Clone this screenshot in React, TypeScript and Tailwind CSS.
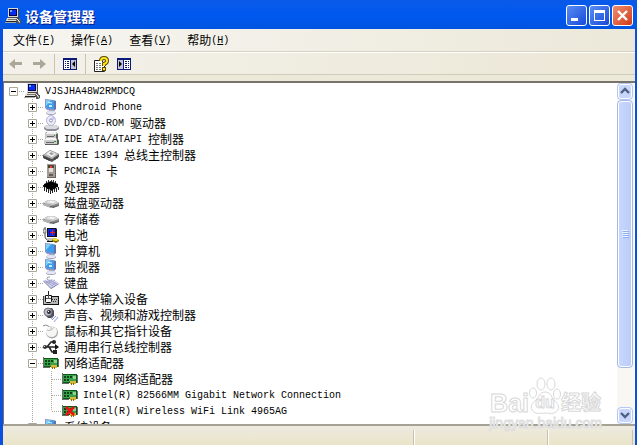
import React from "react";

type IconName =
  | "computer"
  | "phone"
  | "disc"
  | "ide"
  | "firewire"
  | "pcmcia"
  | "cpu"
  | "drive"
  | "battery"
  | "pc"
  | "monitor"
  | "keyboard"
  | "hid"
  | "sound"
  | "mouse"
  | "usb"
  | "network"
  | "networkOff";

type Device = { label: string; icon: IconName; open?: boolean; children?: Device[] };

const categories: Device[] = [
  { label: "Android Phone", icon: "phone" },
  { label: "DVD/CD-ROM 驱动器", icon: "disc" },
  { label: "IDE ATA/ATAPI 控制器", icon: "ide" },
  { label: "IEEE 1394 总线主控制器", icon: "firewire" },
  { label: "PCMCIA 卡", icon: "pcmcia" },
  { label: "处理器", icon: "cpu" },
  { label: "磁盘驱动器", icon: "drive" },
  { label: "存储卷", icon: "drive" },
  { label: "电池", icon: "battery" },
  { label: "计算机", icon: "pc" },
  { label: "监视器", icon: "monitor" },
  { label: "键盘", icon: "keyboard" },
  { label: "人体学输入设备", icon: "hid" },
  { label: "声音、视频和游戏控制器", icon: "sound" },
  { label: "鼠标和其它指针设备", icon: "mouse" },
  { label: "通用串行总线控制器", icon: "usb" },
  {
    label: "网络适配器",
    icon: "network",
    open: true,
    children: [
      { label: "1394 网络适配器", icon: "network" },
      { label: "Intel(R) 82566MM Gigabit Network Connection", icon: "network" },
      { label: "Intel(R) Wireless WiFi Link 4965AG", icon: "networkOff" },
    ],
  },
  { label: "系统设备", icon: "monitor" },
];

const menus = [
  { label: "文件", accessKey: "F" },
  { label: "操作", accessKey: "A" },
  { label: "查看", accessKey: "V" },
  { label: "帮助", accessKey: "H" },
];

const Screen = ({ glint }: { glint?: boolean }) => (
  <>
    <path d="M2 0l9 1 2 1v8l-2 2-7-1-2-2z" fill="#8c96c4" />
    <path d="M3 1l8 1v8l-7-1-1-1z" fill="#3c9cec" />
    <path d="M3 1l5 .6L3 7z" fill="#7cd0fc" />
    <path d="M11 2h2v8l-2 1z" fill="#6470ac" />
    {glint && (
      <>
        <path d="M5 3l4 .5v1L5 4z" fill="#e4f6ff" />
        <path d="M6 6h3v2H6z" fill="#c4ecff" />
      </>
    )}
    <path d="M6 11h4v2H6z" fill="#a7acc8" />
    <ellipse cx="8" cy="14" rx="5" ry="2" fill="#a6a9c2" />
    <ellipse cx="8" cy="13.500" rx="4.500" ry="1.500" fill="#e6e7f3" />
  </>
);

const Card = () => (
  <>
    <path d="M0 3h15v9H0z" fill="#0b5a1c" />
    <path d="M1 4h13v7H1z" fill="#3aa04a" />
    <path d="M2 5h2v2H2zM5 5h2v2H5zM8 5h2v2H8zM2 8h2v2H2zM5 8h2v2H5z" fill="#0b4414" />
    <path d="M11 5h3v3h-3z" fill="#8fd08f" />
    <path d="M15 4h1v8h-1zM1 12h6v1H1zM0 2h1v11H0z" fill="#6a6a6a" />
    <path d="M8 10h6v3H8z" fill="#d8b838" />
    <path d="M9 12h1v2H9zM11 12h1v2h-1z" fill="#8a6d10" />
  </>
);

const drawings: Record<IconName, React.ReactNode> = {
  computer: (
    <>
      <path d="M3 0h10l1 1v9H4L3 9z" fill="#4a4a48" />
      <path d="M3 0h10v9H3z" fill="#dcdcd4" />
      <path d="M4 1h8v7H4z" fill="#000050" />
      <path d="M5 2h6v5H5z" fill="#0a2cf0" />
      <path d="M5 2h2v2H5z" fill="#60b8ff" />
      <path d="M2 10h12l1 3H1z" fill="#e2e0d8" />
      <path d="M1 13h13v1H1z" fill="#222" />
      <path d="M3 11h9v1H3z" fill="#77756c" />
      <path d="M0 14h11v1H0z" fill="#a9a9a1" />
      <path d="M12 10h2l1 2h1v3l-2 1h-2v-2l-1-1z" fill="#55554f" />
      <path d="M12 11l2 2v1h1" fill="none" stroke="#eee" />
    </>
  ),
  phone: <Screen glint />,
  monitor: <Screen glint />,
  pc: <Screen />,
  disc: (
    <>
      <path d="M1 12l3-2h9l3 2v2l-3 2H4l-3-2z" fill="#8e8e98" />
      <path d="M1 12l3-2h9l3 2-3 2H4z" fill="#dadae0" />
      <ellipse cx="8" cy="5.500" rx="4.500" ry="5" fill="#ececf8" stroke="#b4b4d0" />
      <path d="M8 5l2-4 2 3z" fill="#bcc4ff" />
      <circle cx="8" cy="5.500" r="1.500" fill="#fff" stroke="#9494b8" />
    </>
  ),
  ide: (
    <>
      <path d="M3 1h10l2 2v6H2V3z" fill="#5d5d5d" />
      <path d="M4 1h9l1 2H2z" fill="#f2f2f2" />
      <path d="M2 3h11v4H2z" fill="#c8c8c8" />
      <path d="M4 7h9l3 2v4l-1 1H2V9z" fill="#5d5d5d" />
      <path d="M3 7h10l1 2H1z" fill="#f6f6f6" />
      <path d="M1 9h13v4H1z" fill="#cdcdcd" />
      <path d="M3 11h8v1H3zM4 5h7v1H4z" fill="#666" />
      <path d="M11 10h2v1h-2zM11 4h1v1h-1z" fill="#22a022" />
    </>
  ),
  firewire: (
    <>
      <path d="M0 8l7-5 9 4v3l-7 5-9-4z" fill="#555" />
      <path d="M0 8l7-5 9 4-7 5z" fill="#b9b9b9" />
      <path d="M3 7l4-3 6 3-4 3z" fill="#f2f2f2" />
      <path d="M6 7l2-2 3 2-2 1z" fill="#999" />
      <path d="M2 10v2M4 11v2M6 12v2M12 11v2M14 10v2" stroke="#333" />
    </>
  ),
  pcmcia: (
    <>
      <path d="M4 1h8l1 1v13H4z" fill="#6c6460" />
      <path d="M4 1h8v13H4z" fill="#a39a94" />
      <path d="M5 2h6v3H5z" fill="#4d4541" />
      <path d="M6 5h4v4H6z" fill="#e2ddd8" />
      <path d="M7 3h2v2H7z" fill="#f04020" />
      <path d="M6 11h4v2H6z" fill="#635a56" />
    </>
  ),
  cpu: (
    <>
      <path d="M1 5l7-3 7 3v3l-7 4-7-4z" fill="#000" />
      <path d="M1.500 8v4M3.500 9v4M5.500 10v4M7.500 12v3M9.500 11v3M11.500 10v3M13.500 9v4M15.500 8v3" stroke="#222" />
      <path d="M3.500 2v2M5.500 1v2M8.500 1v2M10.500 1v2M12.500 2v2M.5 6v2" stroke="#333" />
      <path d="M2 8h1v1H2zM6 10h1v1H6zM10 10h1v1h-1zM13 8h1v1h-1z" fill="#aaa" />
    </>
  ),
  drive: (
    <>
      <path d="M0 8l5-3h6l5 3v2l-6 3h-2L0 10z" fill="#8a8a8a" />
      <path d="M0 8l5-3h6l5 3-6 2z" fill="#d2d2d2" />
      <path d="M4 7l3-1h4l2 1-4 1z" fill="#f6f6f6" />
      <path d="M0 8l9 2v3L0 10z" fill="#b2b2b2" />
      <path d="M9 12l7-2v1l-6 2z" fill="#5f5f5f" />
      <path d="M7 11h2v1H7z" fill="#4c6a4c" />
    </>
  ),
  battery: (
    <>
      <path d="M4 1h9l1 1v8H4z" fill="#111" />
      <path d="M5 2h7v7H5z" fill="#1028e8" />
      <path d="M6 3h1v5H6z" fill="#101080" />
      <path d="M9 3h1v2h2v1h-2v2H9V6H7V5h2z" fill="#f02020" />
      <path d="M2 0v9q0 4 5 5" fill="none" stroke="#444" />
      <path d="M0 2h3v4H0z" fill="#ccc" stroke="#333" strokeWidth=".5" />
      <path d="M4 11h8v3H6z" fill="#c3c3bb" />
      <path d="M4 14h6v1H4z" fill="#111" />
      <path d="M9 13l3-2 4 2v1l-3 2-4-2z" fill="#776a08" />
      <path d="M9 13l3-2 4 2-3 1z" fill="#f5e628" />
    </>
  ),
  keyboard: (
    <>
      <path d="M0 6l9-1 7 4-8 5z" fill="#7678a8" />
      <path d="M0 5l9-1 7 4-8 5z" fill="#dadbf2" />
      <path d="M2 6l10 3M5 5l8 3M3 7l7 4M5 9l7-4M3 8l6-3M8 11l6-3" stroke="#a2a4d0" />
      <path d="M5 5q-3-3 2-3" fill="none" stroke="#9c9cae" />
    </>
  ),
  hid: (
    <>
      <path d="M1 5h14v9H1z" fill="#b7b7b7" />
      <path d="M8 5h7v1H8zM15 5h1v9h-1zM0 13h16v1H0z" fill="#111" />
      <path d="M0 5h1v9H0z" fill="#444" />
      <path d="M9 8h1v1H9zM11 8h1v1h-1zM13 8h1v1h-1zM10 10h1v1h-1zM12 10h1v1h-1z" fill="#333" />
      <path d="M5.500 0v4" stroke="#222" />
      <path d="M2.500 4.500h6v6l-1 1h-4l-1-1z" fill="#f8f8f8" stroke="#111" />
      <path d="M5.500 4v3M3 7.500h5" stroke="#555" />
    </>
  ),
  sound: (
    <>
      <path d="M4 1h5l2 3v5l-3 2H5L2 8V3z" fill="#4f4f57" />
      <circle cx="5" cy="5" r="4" fill="#b9b9c4" stroke="#74747c" />
      <circle cx="6" cy="5" r="2" fill="#303038" />
      <path d="M5 4h1v1H5z" fill="#fff" />
      <path d="M9 13l4-4M11 15l4-5M8 12l2-2" stroke="#8f9ae0" />
    </>
  ),
  mouse: (
    <>
      <path d="M0 3q3-2 5 0l2 1" fill="none" stroke="#8c8c8c" />
      <ellipse cx="9" cy="9.500" rx="6" ry="6" fill="#a9a9a9" />
      <ellipse cx="8.500" cy="8.500" rx="5.500" ry="5.500" fill="#f6f6f4" />
      <path d="M4 7q4 2 7-3M8 3v4" fill="none" stroke="#bcbcbc" />
    </>
  ),
  usb: (
    <>
      <path d="M1 8h13M4 8l4-5h3M6 8l3 5h2" fill="none" stroke="#222" strokeWidth="1.500" />
      <circle cx="2" cy="8" r="2" fill="#333" />
      <path d="M1 7h1v1H1z" fill="#ccc" />
      <path d="M12 5l4 3-4 3z" fill="#111" />
      <circle cx="11" cy="3" r="2" fill="#222" />
      <path d="M10 11h4v4h-4z" fill="#222" />
    </>
  ),
  network: <Card />,
  networkOff: (
    <>
      <Card />
      <path d="M4 4l8 8M12 4l-8 8" stroke="#f01010" strokeWidth="2.500" />
    </>
  ),
};

const Icon = ({ name }: { name: IconName }) => (
  <svg viewBox="0 0 16 16" className="size-4 shrink-0" aria-hidden="true">
    {drawings[name]}
  </svg>
);

// Latin runs use a half-width face so that two letters take one ideograph
const Label = ({ text }: { text: string }) => (
  <span className="flex items-center whitespace-pre pl-[5px] text-xs leading-4">
    {text.split(/([\x20-\x7e]+)/).filter(Boolean).map((run, i) =>
      /^[\x20-\x7e]/.test(run) ? (
        <span key={i} className="pt-px font-['Liberation_Mono',monospace] text-[10px] leading-4">
          {run}
        </span>
      ) : (
        <span key={i}>{run}</span>
      )
    )}
  </span>
);

const Guide = ({ line, branch }: { line?: "full" | "half"; branch?: boolean }) => (
  <svg viewBox="0 0 19 16" className="h-4 w-[19px] shrink-0" aria-hidden="true">
    {line && (
      <path d={line === "full" ? "M8.5 0v16" : "M8.5 0v8"} stroke="#aca899" strokeDasharray="1 1" />
    )}
    {branch && <path d="M9 8.5h10" stroke="#aca899" strokeDasharray="1 1" />}
  </svg>
);

const Expander = ({ open, root, label }: { open?: boolean; root?: boolean; label: string }) => (
  <button aria-label={label} aria-expanded={!!open} className="h-4 w-[19px] shrink-0">
    <svg viewBox="0 0 19 16" className="h-4 w-[19px]">
      {!root && <path d="M8.5 0v16" stroke="#aca899" strokeDasharray="1 1" />}
      <path d="M14 8.5h5" stroke="#aca899" strokeDasharray="1 1" />
      <path d="M4.5 4.5h8v8h-8z" fill="#fff" stroke="#aca899" />
      <path d={open ? "M6 8.5h5" : "M6 8.5h5M8.5 6v5"} stroke="#000" />
    </svg>
  </button>
);

const Category = ({ device }: { device: Device }) => (
  <li>
    <div className="flex h-4 items-center">
      <Guide />
      <Expander open={device.open} label={device.label} />
      <Icon name={device.icon} />
      <Label text={device.label} />
    </div>
    {device.children && (
      <ul>
        {device.children.map((child, i) => (
          <li key={child.label} className="flex h-4 items-center">
            <Guide />
            <Guide line="full" />
            <Guide line={i === device.children!.length - 1 ? "half" : "full"} branch />
            <Icon name={child.icon} />
            <Label text={child.label} />
          </li>
        ))}
      </ul>
    )}
  </li>
);

const TitleBar = () => (
  <header className="flex h-[29px] shrink-0 items-center bg-linear-to-b from-[#0a5ae8] via-[#0058f0] to-[#0054e0] pl-[5px] pr-1 pt-0.5">
    <Icon name="computer" />
    <h1 className="flex-1 pl-1 text-sm font-bold leading-5 text-white [text-shadow:1px_1px_#0a1883]">
      设备管理器
    </h1>
    <div className="flex gap-0.5">
      <button aria-label="最小化" className="size-[21px] rounded-[3px] border border-white bg-linear-to-br from-[#5a8cf4] to-[#1a48d8]">
        <svg viewBox="0 0 19 19">
          <path d="M4 12h7v3H4z" fill="#fff" />
        </svg>
      </button>
      <button aria-label="最大化" className="size-[21px] rounded-[3px] border border-white bg-linear-to-br from-[#5a8cf4] to-[#1a48d8]">
        <svg viewBox="0 0 19 19">
          <path d="M4 4h11v11H4zM5 7v7h9V7z" fill="#fff" fillRule="evenodd" />
        </svg>
      </button>
      <button aria-label="关闭" className="size-[21px] rounded-[3px] border border-white bg-linear-to-br from-[#f08c6c] to-[#d03810]">
        <svg viewBox="0 0 19 19">
          <path d="M5 5l9 9M14 5l-9 9" stroke="#fff" strokeWidth="2.400" />
        </svg>
      </button>
    </div>
  </header>
);

const MenuBar = () => (
  <nav className="flex h-[23px] shrink-0 items-center border-b border-[#d6d2c2] bg-linear-to-r from-[#f6f5f1] to-[#ece8d9] pl-[2px]">
    {menus.map((menu) => (
      <button key={menu.accessKey} className="flex items-center px-2 text-xs leading-4">
        {menu.label}
        <span className="pt-px font-['Liberation_Mono',monospace] text-[10px]">
          (<u>{menu.accessKey}</u>)
        </span>
      </button>
    ))}
  </nav>
);

const Toolbar = () => (
  <div className="flex h-[23px] shrink-0 items-center border-b border-t border-b-[#d0ccbb] border-t-white bg-linear-to-r from-[#f3f1ea] to-[#ece7d6] pl-[5px]">
    <button aria-label="后退" disabled className="mr-[7px]">
      <svg viewBox="0 0 16 16" className="size-4">
        <path d="M1 8l6-5v3h7v3H7v4z" fill="#aca899" />
      </svg>
    </button>
    <button aria-label="前进" disabled>
      <svg viewBox="0 0 16 16" className="size-4">
        <path d="M15 8L9 3v3H2v3h7v4z" fill="#aca899" />
      </svg>
    </button>
    <span className="mx-[7px] h-5 w-px bg-[#c9c4b2]" />
    <button aria-label="显示/隐藏控制台树">
      <svg viewBox="0 0 16 16" className="size-4">
        <path d="M1 2h14v12H1z" fill="#0a1a78" />
        <path d="M2 4h6v9H2z" fill="#fff" />
        <path d="M8 4h6v9H8z" fill="#c4c4d4" />
        <path d="M3 5h1v1H3zM5 5h2v1H5zM3 7h1v1H3zM5 7h2v1H5zM3 9h1v1H3zM5 9h2v1H5zM3 11h1v1H3zM5 11h2v1H5zM8 4h1v9H8z" fill="#0a1a78" />
        <path d="M13 5v6l-3-3z" fill="#000" />
      </svg>
    </button>
    <span className="mx-[7px] h-5 w-px bg-[#c9c4b2]" />
    <button aria-label="帮助" className="mr-[7px]">
      <svg viewBox="0 0 16 16" className="size-4">
        <path d="M1.500 4.500h7l3 3v8h-10z" fill="#fff" stroke="#222" />
        <path d="M3 7.500h5M3 9.500h6M3 11.500h6M3 13.500h6" stroke="#777" strokeDasharray="2 1" />
        <path d="M8 5q0-3 3-3t3 3q0 2-3 3v2" fill="none" stroke="#5a4a00" strokeWidth="4" />
        <path d="M8 5q0-3 3-3t3 3q0 2-3 3v2" fill="none" stroke="#ffe81c" strokeWidth="2" />
        <path d="M9 11h4v4H9z" fill="#5a4a00" />
        <path d="M10 12h2v2h-2z" fill="#ffe81c" />
      </svg>
    </button>
    <button aria-label="显示/隐藏操作窗格">
      <svg viewBox="0 0 16 16" className="size-4">
        <path d="M1 2h14v12H1z" fill="#0a1a78" />
        <path d="M8 4h6v9H8z" fill="#fff" />
        <path d="M2 4h5v9H2z" fill="#c4c4d4" />
        <path d="M7 4h1v9H7zM9 5h2v1H9zM12 5h1v1h-1zM9 7h2v1H9zM12 7h1v1h-1zM9 9h2v1H9zM12 9h1v1h-1zM9 11h2v1H9zM12 11h1v1h-1z" fill="#0a1a78" />
        <path d="M3 5v6l3-3z" fill="#000" />
      </svg>
    </button>
  </div>
);

const ScrollBar = () => (
  <div className="flex w-[17px] shrink-0 flex-col bg-[#f8f7f3] pr-px">
    <button aria-label="向上滚动" className="h-[17px] shrink-0 rounded-sm border border-[#b4c8f6] bg-[#c8d6fb] shadow-[inset_0_0_0_1px_#fff]">
      <svg viewBox="0 0 14 15" className="h-[15px] w-[14px]">
        <path d="M3 9l4-4 4 4" fill="none" stroke="#4d6185" strokeWidth="2.400" />
      </svg>
    </button>
    <div className="flex flex-1 flex-col">
      <div className="flex flex-[27] items-center justify-center rounded-sm border border-[#a4b8ec] bg-linear-to-r from-[#cad8fd] to-[#b9cbf8] shadow-[inset_0_0_0_1px_#fff]">
        <svg viewBox="0 0 7 8" className="h-2 w-[7px]">
          <path d="M0 .5h6M0 2.500h6M0 4.500h6M0 6.500h6" stroke="#eef4fe" />
          <path d="M1 1.500h6M1 3.500h6M1 5.500h6M1 7.500h6" stroke="#8cb0f8" />
        </svg>
      </div>
      <div className="flex-[4]" />
    </div>
    <button aria-label="向下滚动" className="h-[17px] shrink-0 rounded-sm border border-[#b4c8f6] bg-[#c8d6fb] shadow-[inset_0_0_0_1px_#fff]">
      <svg viewBox="0 0 14 15" className="h-[15px] w-[14px]">
        <path d="M3 5l4 4 4-4" fill="none" stroke="#4d6185" strokeWidth="2.400" />
      </svg>
    </button>
  </div>
);

const Watermark = () => (
  <div className="pointer-events-none absolute bottom-[14px] right-[33px] flex flex-col items-center font-['Liberation_Sans','Noto_Sans_CJK_SC',sans-serif] text-white [-webkit-text-stroke:1px_#d8d8d8]">
    <div className="flex items-end">
      <span className="text-[25px] font-bold leading-6">Bai</span>
      <span className="relative flex h-10 w-8 items-end justify-center pb-0.5">
        <svg viewBox="0 0 32 40" className="absolute inset-0 h-10 w-8" fill="#fff" stroke="#d8d8d8">
          <ellipse cx="4" cy="18" rx="3.500" ry="5" />
          <ellipse cx="12" cy="9" rx="4" ry="6" />
          <ellipse cx="22" cy="9" rx="4" ry="6" />
          <ellipse cx="28" cy="19" rx="3.500" ry="5" />
          <path d="M16 17c-5 0-6 5-9 8-4 3-6 6-4 10 3 5 9 3 13 3s9 2 13-3c2-4-1-7-4-10-3-4-4-8-9-8z" />
        </svg>
        <span className="relative text-base font-bold leading-5">du</span>
      </span>
      <span className="text-xl font-bold leading-6">经验</span>
    </div>
    <span className="text-sm leading-4 [-webkit-text-stroke:1px_#dedede]">jingyan.baidu.com</span>
  </div>
);

const StatusBar = () => (
  <footer className="flex h-[21px] shrink-0 items-stretch border-t-2 border-[#a5a294] bg-linear-to-b from-[#eeebe0] to-[#e9e4c8] pr-0.5 pt-1">
    <span className="flex-1 border-r border-[#c5c1ac]" />
    <span className="w-[134px] border-l border-r border-l-white border-r-[#c5c1ac]" />
    <span className="w-[85px] border-l border-r border-l-white border-r-[#c5c1ac]" />
  </footer>
);

export default function App() {
  return (
    <div className="flex h-screen flex-col overflow-hidden bg-[#0048d8] font-['Noto_Sans_CJK_SC',sans-serif] text-black">
      <TitleBar />
      <div className="relative flex min-h-0 flex-1 flex-col border-l-[3px] border-r-2 border-[#0a50e0] bg-[#ece9d8]">
        <MenuBar />
        <Toolbar />
        <div className="h-[6px] shrink-0" />
        <main className="flex min-h-0 flex-1 border-l border-t-2 border-[#77736a] bg-white pr-px">
          <ul className="min-w-0 flex-1 overflow-hidden pl-px">
            <li>
              <div className="flex h-4 items-center">
                <Expander open root label="VJSJHA48W2RMDCQ" />
                <Icon name="computer" />
                <Label text="VJSJHA48W2RMDCQ" />
              </div>
              <ul>
                {categories.map((device) => (
                  <Category key={device.label} device={device} />
                ))}
              </ul>
            </li>
          </ul>
          <ScrollBar />
        </main>
        <StatusBar />
        <Watermark />
      </div>
    </div>
  );
}
